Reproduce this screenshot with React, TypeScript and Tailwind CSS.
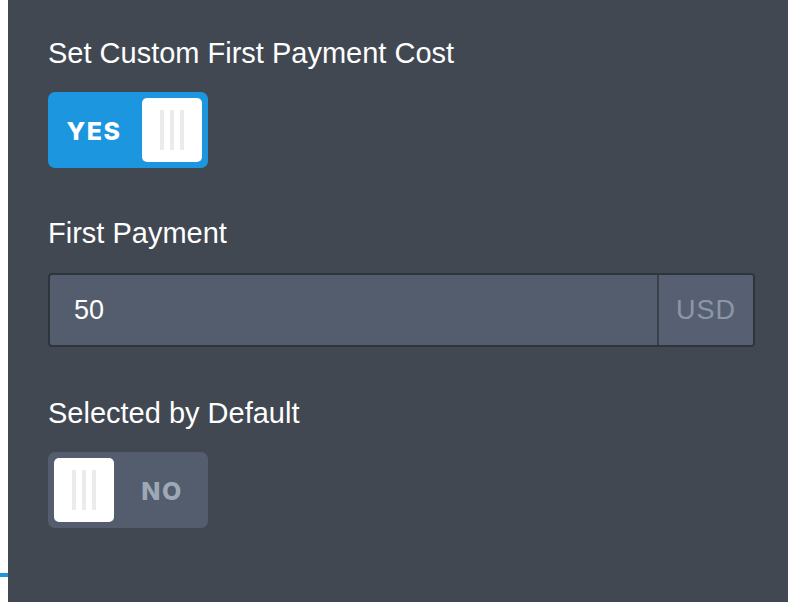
import React from "react";

function Grip() {
  return (
    <div className="flex gap-[6px] h-[40px]">
      <div className="w-[4px] h-full bg-[#ebebeb]" />
      <div className="w-[4px] h-full bg-[#ebebeb]" />
      <div className="w-[4px] h-full bg-[#ebebeb]" />
    </div>
  );
}

function Toggle({ on }: { on: boolean }) {
  if (on) {
    return (
      <div className="w-[160px] h-[76px] rounded-[7px] bg-[#1c96df] p-[6px] flex items-center">
        <div className="flex-1 flex items-center justify-center pr-[8px] pt-[2px]">
          <span className="text-white font-extrabold text-[25px] tracking-[1.5px] leading-none" style={{ fontFamily: "Inter, 'Liberation Sans', sans-serif" }}>YES</span>
        </div>
        <div className="w-[60px] h-[64px] rounded-[5px] bg-white flex items-center justify-center">
          <Grip />
        </div>
      </div>
    );
  }
  return (
    <div className="w-[160px] h-[76px] rounded-[7px] bg-[#535d6d] p-[6px] flex items-center">
      <div className="w-[60px] h-[64px] rounded-[5px] bg-white flex items-center justify-center">
        <Grip />
      </div>
      <div className="flex-1 flex items-center justify-center pl-[8px] pt-[2px]">
        <span className="text-[#9ea9b7] font-extrabold text-[25px] tracking-[1.5px] leading-none" style={{ fontFamily: "Inter, 'Liberation Sans', sans-serif" }}>NO</span>
      </div>
    </div>
  );
}

export default function App() {
  return (
    <div className="w-[788px] h-[602px] flex bg-white overflow-hidden" style={{ fontFamily: "'Liberation Sans', Arial, sans-serif" }}>
      <div className="w-[8px] h-full flex flex-col">
        <div className="h-[573px]" />
        <div className="h-[4px] bg-[#1c96df]" />
      </div>
      <div className="flex-1 h-full bg-[#414851] pl-[40px] pr-[33px] pt-[36px]">
        <div className="text-white text-[29px] leading-[34px]">Set Custom First Payment Cost</div>
        <div className="mt-[22px]">
          <Toggle on={true} />
        </div>
        <div className="mt-[48px] text-white text-[29px] leading-[34px]">First Payment</div>
        <div className="mt-[23px] h-[74px] flex rounded-[4px] border-2 border-[#2e343c] bg-[#535d6d] overflow-hidden">
          <div className="flex-1 flex items-center pl-[24px] text-white text-[27px]">50</div>
          <div className="w-[96px] border-l-2 border-[#3a414b] bg-[#566072] flex items-center justify-center text-[#8c97a6] text-[27px] tracking-[1px]">USD</div>
        </div>
        <div className="mt-[49px] text-white text-[29px] leading-[34px]">Selected by Default</div>
        <div className="mt-[22px]">
          <Toggle on={false} />
        </div>
      </div>
    </div>
  );
}
